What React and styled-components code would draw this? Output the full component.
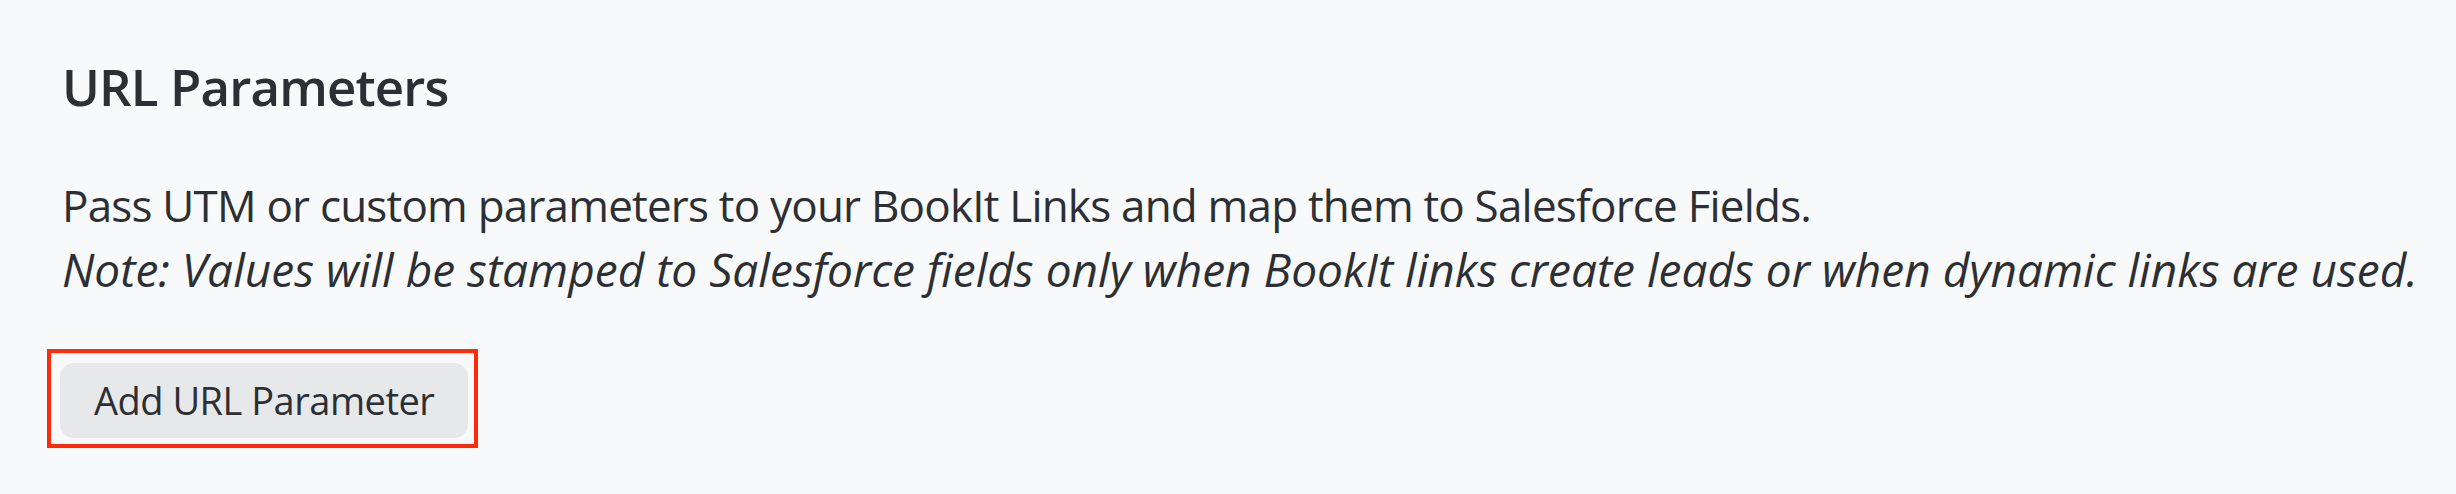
import React from "react";
import styled, { createGlobalStyle } from "styled-components";

const Global = createGlobalStyle`
  html, body {
    margin: 0;
    padding: 0;
    background: #f8f9fa;
  }
  body {
    font-family: "Open Sans", "Noto Sans", sans-serif;
    color: #2c2f33;
    -webkit-font-smoothing: antialiased;
  }
`;

const Section = styled.section`
  box-sizing: border-box;
  width: 2456px;
  height: 494px;
  padding: 50px 0 0 62px;
  background: #f8f9fa;
  display: flex;
  flex-direction: column;
  align-items: flex-start;
`;

const Title = styled.h2`
  margin: 0;
  font-size: 51px;
  line-height: 72px;
  letter-spacing: -0.85px;
  font-weight: 600;
  color: #2c2f33;
`;

const Description = styled.div`
  margin-top: 51px;
  line-height: 64px;
  font-weight: 400;
  color: #2c2f33;
`;

const Line = styled.p`
  margin: 0;
  font-size: ${(p) => (p.$italic ? "46px" : "44px")};
  letter-spacing: ${(p) => (p.$italic ? "0" : "-0.8px")};
  font-style: ${(p) => (p.$italic ? "italic" : "normal")};
  white-space: nowrap;
`;

const Highlight = styled.div`
  position: relative;
  margin-top: 62px;
  margin-left: -2px;

  &::after {
    content: "";
    position: absolute;
    top: -14px;
    left: -13px;
    right: -10px;
    bottom: -10px;
    border: 4px solid #ff2a0a;
    pointer-events: none;
  }
`;

const Button = styled.button`
  box-sizing: border-box;
  height: 75px;
  padding: 0 34px;
  border: none;
  border-radius: 14px;
  background: #e6e8ea;
  font-family: "Open Sans", "Noto Sans", sans-serif;
  font-size: 38px;
  letter-spacing: -0.5px;
  line-height: 75px;
  font-weight: 400;
  color: #2c2f33;
  cursor: pointer;
`;

export default function App() {
  return (
    <>
      <Global />
      <Section>
        <Title>URL Parameters</Title>
        <Description>
          <Line>
            Pass UTM or custom parameters to your BookIt Links and map them to
            Salesforce Fields.
          </Line>
          <Line $italic>
            Note: Values will be stamped to Salesforce fields only when BookIt
            links create leads or when dynamic links are used.
          </Line>
        </Description>
        <Highlight>
          <Button type="button">Add URL Parameter</Button>
        </Highlight>
      </Section>
    </>
  );
}
